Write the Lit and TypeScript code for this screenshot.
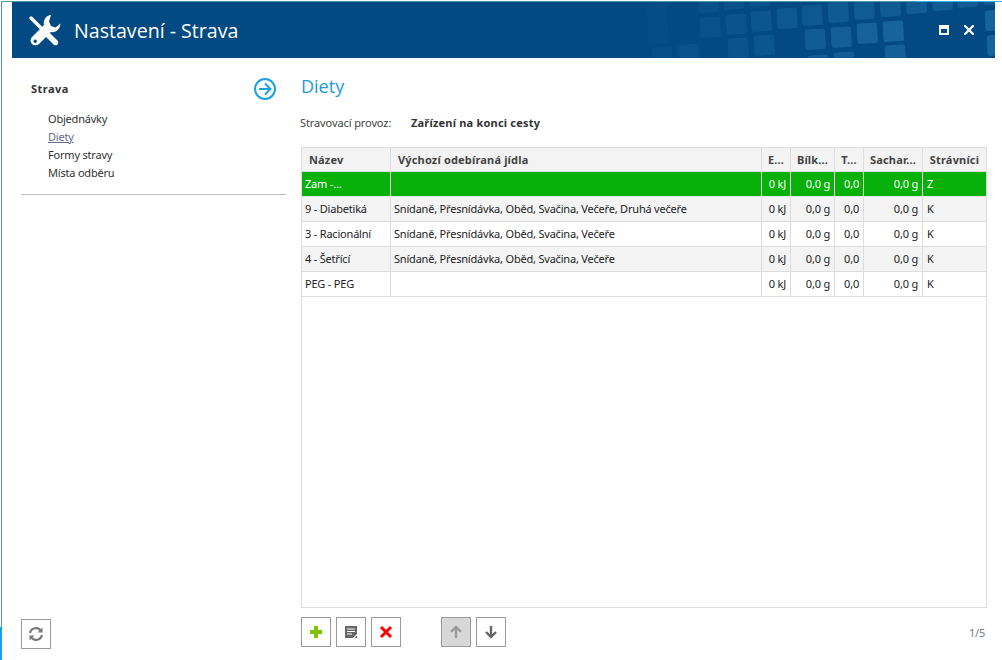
import { LitElement, html, css, svg } from "lit";
import { customElement } from "lit/decorators.js";

const SQUARES: [number, number, number][] = [
  [623,25,.02],[648,23,.05],[647,3,.05],[652,47,.06],[677,44,.07],[700,17,.1],[726,14,.12],[751,11,.14],[777,8,.16],
  [728,38,.12],[754,35,.14],[698,-8,.09],[723,-11,.11],[749,-14,.13],
  [802,5,.17],[828,2,.19],[854,-1,.2],[880,-4,.2],[906,-7,.22],[932,-10,.22],[957,-13,.22],[983,-16,.22],
  [805,29,.22],[831,27,.24],[857,23,.27],[883,21,.3],[808,55,.22],[834,52,.22],[885,45,.26],[680,44,.07],
  [985,10,.29],[987,35,.29],
];

const MEALS_ALL = "Snídaně, Přesnídávka, Oběd, Svačina, Večeře, Druhá večeře";
const MEALS = "Snídaně, Přesnídávka, Oběd, Svačina, Večeře";
const ROWS = [
  { name: "Zam -...", meals: "", k: "Z", cls: "sel" },
  { name: "9 - Diabetiká", meals: MEALS_ALL, k: "K", cls: "alt" },
  { name: "3 - Racionální", meals: MEALS, k: "K", cls: "" },
  { name: "4 - Šetřící", meals: MEALS, k: "K", cls: "alt" },
  { name: "PEG - PEG", meals: "", k: "K", cls: "" },
];

@customElement("app-root")
export class AppRoot extends LitElement {
  static styles = css`
    :host { display: block; width: 1002px; height: 660px; overflow: hidden; background: #fff;
      font-family: "Noto Sans", "Open Sans", sans-serif; font-size: 11px; color: #333; letter-spacing: -0.2px; }
    .shell { display: grid; grid-template-columns: 2px 1fr; height: 660px; }
    .rail { display: flex; flex-direction: column; padding-top: 1px; }
    .rail-top { flex: 1; border-right: 1px solid #4d97a8; }
    .rail-bottom { height: 33px; background: #1ba1e2; }
    .main { display: flex; flex-direction: column; min-width: 0; }
    .topline { display: flex; height: 2px; padding-top: 1px; box-sizing: border-box; }
    .topline i { display: block; height: 1px; }
    .topline .a { flex: 1; background: #4d97a8; }
    .topline .b { width: 85px; background: #3ab0e0; }
    header { position: relative; margin: 0 7px 0 10px; height: 56px; background: #024a81;
      display: flex; align-items: center; overflow: hidden; flex: none; }
    .pattern { position: absolute; left: 0; top: 0; }
    .logo { position: relative; margin-left: 16px; width: 34px; height: 34px; flex: none; }
    h1 { position: relative; margin: 0 0 0 12px; font-size: 19.6px; font-weight: 400; color: #fff; letter-spacing: 0; font-family: "Open Sans", sans-serif; flex: 1; }
    .win { position: relative; display: flex; gap: 15px; margin-right: 21px; align-items: center; }
    .win svg { display: block; }
    .body { flex: 1; display: flex; min-height: 0; }
    aside { width: 265px; margin-left: 19px; flex: none; display: flex; flex-direction: column; }
    .aside-head { display: flex; align-items: center; justify-content: space-between; padding: 20px 10px 0 10px; height: 22px; }
    .aside-head b { font-size: 11px; line-height: 20px; padding-bottom: 1px; color: #333; font-weight: 700; letter-spacing: 0.45px; }
    nav { display: flex; flex-direction: column; padding: 10px 0 12px 27px; border-bottom: 1px solid #bdbdbd; }
    nav a { height: 18px; line-height: 18px; color: #333; }
    nav a.on { color: #6a6a8a; text-decoration: underline; }
    .aside-foot { margin-top: auto; padding-bottom: 11px; }
    .content { flex: 1; display: flex; flex-direction: column; margin: 0 15px 0 15px; min-width: 0; }
    h2 { margin: 15px 0 0 0; font-size: 18px; line-height: 26px; font-weight: 400; color: #1a9ae0; letter-spacing: 0; font-family: "Open Sans", sans-serif; }
    .field { display: flex; align-items: center; height: 16px; margin-top: 15px; }
    .field span { width: 110px; margin-left: -1px; color: #444; letter-spacing: -0.1px; padding-right: 1px; }
    .field b { font-size: 11px; font-weight: 700; color: #333; letter-spacing: 0.2px; }
    .grid { flex: none; height: 459px; margin-top: 17px; border: 1px solid #ddd; overflow: hidden; }
    table { border-collapse: separate; border-spacing: 0; table-layout: fixed; width: 684px; }
    col:nth-child(1) { width: 89px; }
    col:nth-child(2) { width: 371px; }
    col:nth-child(3) { width: 29px; }
    col:nth-child(4) { width: 44px; }
    col:nth-child(5) { width: 29px; }
    col:nth-child(6) { width: 59px; }
    col:nth-child(7) { width: 63px; }
    th { height: 24px; padding: 0 0 1px; box-sizing: border-box; background: #f3f3f3; border-right: 1px solid #ddd; border-bottom: 1px solid #ddd;
      font-size: 11px; font-weight: 700; color: #444; letter-spacing: 0.17px; text-align: left; overflow: hidden; white-space: nowrap; }
    th:last-child, td:last-child { border-right: none; }
    th.c { text-align: center; }
    th.n { padding-left: 7px; }
    td { height: 25px; box-sizing: border-box; padding: 0 3px 1px; border-right: 1px solid #ddd; border-bottom: 1px solid #ddd;
      white-space: nowrap; overflow: hidden; color: #222; }
    td.r { text-align: right; padding-right: 4px; padding-left: 0; }
    td.k { padding-left: 4px; }
    tr.alt td { background: #f4f4f4; }
    tr.sel td { background: #08b00a; color: #fff; border-bottom-color: #e6e6e6; border-right-color: #e6f5e6; }
    .toolbar { display: flex; align-items: center; gap: 5px; height: 30px; margin-top: 9px; margin-bottom: 13px; }
    .gap { width: 30px; }
    .pager { margin-left: auto; margin-right: 2px; color: #7a7a8a; }
    button { width: 30px; height: 30px; padding: 0; border: 1px solid #999; background: #fff; display: flex; align-items: center; justify-content: center; box-sizing: border-box; }
    button.off { background: #d8d8d8; }
    button svg { display: block; }
  `;

  render() {
    return html`
      <div class="shell">
        <div class="rail"><div class="rail-top"></div><div class="rail-bottom"></div></div>
        <div class="main">
          <div class="topline"><i class="a"></i><i class="b"></i></div>
          <header>
            <svg class="pattern" width="983" height="56" viewBox="12 2 983 56">
              ${SQUARES.map(([x, y, o]) => svg`<rect x=${x} y=${y} width="20.5" height="20.5" rx="2.5"
                fill="#4aa0d8" opacity=${o} transform="rotate(-3 ${x + 10} ${y + 10})"></rect>`)}
            </svg>
            <svg class="logo" viewBox="27 13 34 34">
              <path d="M30 18 L43 31" stroke="#fff" stroke-width="3.4" stroke-linecap="round" fill="none"/>
              <path d="M44 32 L54.5 42.5" stroke="#fff" stroke-width="5.4" stroke-linecap="round" fill="none"/>
              <path fill="#fff" fill-rule="evenodd" d="M50 15 C45 15.5 42 20 43 25 L31 37 C29 39 29 42 31 44 C33 46 36 45.5 38 44 L50 32 C55 33 59 29 59.5 23.5 L54.5 27.5 L50 26 L48 21.5 Z M34.2 39.5 a1.7 1.7 0 1 0 .01 0 Z"/>
            </svg>
            <h1>Nastavení - Strava</h1>
            <div class="win">
              <svg width="10" height="10" viewBox="0 0 10 10"><path fill="#fff" fill-rule="evenodd" d="M0 0H10V10H0Z M2 4V8H8V4Z"/></svg>
              <svg width="10" height="10" viewBox="0 0 10 10"><path d="M1 1L9 9M9 1L1 9" stroke="#fff" stroke-width="2.2" stroke-linecap="square"/></svg>
            </div>
          </header>
          <div class="body">
            <aside>
              <div class="aside-head">
                <b>Strava</b>
                <svg width="22" height="22" viewBox="0 0 22 22" fill="none" stroke="#1ba1e2" stroke-width="2">
                  <circle cx="11" cy="11" r="10"/>
                  <path d="M5 11H16M11 5.5L16.5 11L11 16.5"/>
                </svg>
              </div>
              <nav>
                <a>Objednávky</a>
                <a class="on">Diety</a>
                <a>Formy stravy</a>
                <a>Místa odběru</a>
              </nav>
              <div class="aside-foot">
                <button aria-label="Obnovit">
                  <svg width="16" height="16" viewBox="0 0 16 16" fill="none" stroke="#777" stroke-width="2.2">
                    <path d="M2 7 A6 6 0 0 1 13 5"/>
                    <path d="M14 9 A6 6 0 0 1 3 11"/>
                    <path d="M14.5 1.5V6.5H9.5Z M1.5 14.5V9.5H6.5Z" fill="#777" stroke="none"/>
                  </svg>
                </button>
              </div>
            </aside>
            <div class="content">
              <h2>Diety</h2>
              <div class="field"><span>Stravovací provoz:</span><b>Zařízení na konci cesty</b></div>
              <div class="grid">
                <table>
                  <colgroup><col/><col/><col/><col/><col/><col/><col/></colgroup>
                  <thead><tr>
                    <th class="n">Název</th><th class="n">Výchozí odebíraná jídla</th><th class="c">E...</th><th class="c">Bílk...</th><th class="c">T...</th><th class="c">Sachar...</th><th class="c">Strávníci</th>
                  </tr></thead>
                  <tbody>
                    ${ROWS.map((r) => html`<tr class=${r.cls}>
                      <td>${r.name}</td><td>${r.meals}</td><td class="r">0 kJ</td><td class="r">0,0 g</td><td class="r">0,0</td><td class="r">0,0 g</td><td class="k">${r.k}</td>
                    </tr>`)}
                  </tbody>
                </table>
              </div>
              <div class="toolbar">
                <button aria-label="Přidat"><svg width="14" height="14" viewBox="0 0 14 14"><path fill="#7fc400" d="M5 1H9V5H13V9H9V13H5V9H1V5H5Z"/></svg></button>
                <button aria-label="Upravit"><svg width="14" height="14" viewBox="0 0 14 14"><path fill="#666" d="M1 1H13V9L9 13H1Z"/><path stroke="#fff" stroke-width="1" d="M3 4H11M3 6.5H11M3 9H8"/><path fill="#666" d="M10.5 13L13 10.5V13Z"/></svg></button>
                <button aria-label="Smazat"><svg width="14" height="14" viewBox="0 0 14 14"><path d="M2 2L12 12M12 2L2 12" stroke="#f00" stroke-width="3"/></svg></button>
                <div class="gap"></div>
                <button class="off" aria-label="Nahoru"><svg width="14" height="14" viewBox="0 0 14 14" fill="none" stroke="#999" stroke-width="2.4"><path d="M7 13V2M2 7L7 2L12 7"/></svg></button>
                <button aria-label="Dolů"><svg width="14" height="14" viewBox="0 0 14 14" fill="none" stroke="#666" stroke-width="2.4"><path d="M7 1V12M2 7L7 12L12 7"/></svg></button>
                <span class="pager">1/5</span>
              </div>
            </div>
          </div>
        </div>
      </div>
    `;
  }
}
